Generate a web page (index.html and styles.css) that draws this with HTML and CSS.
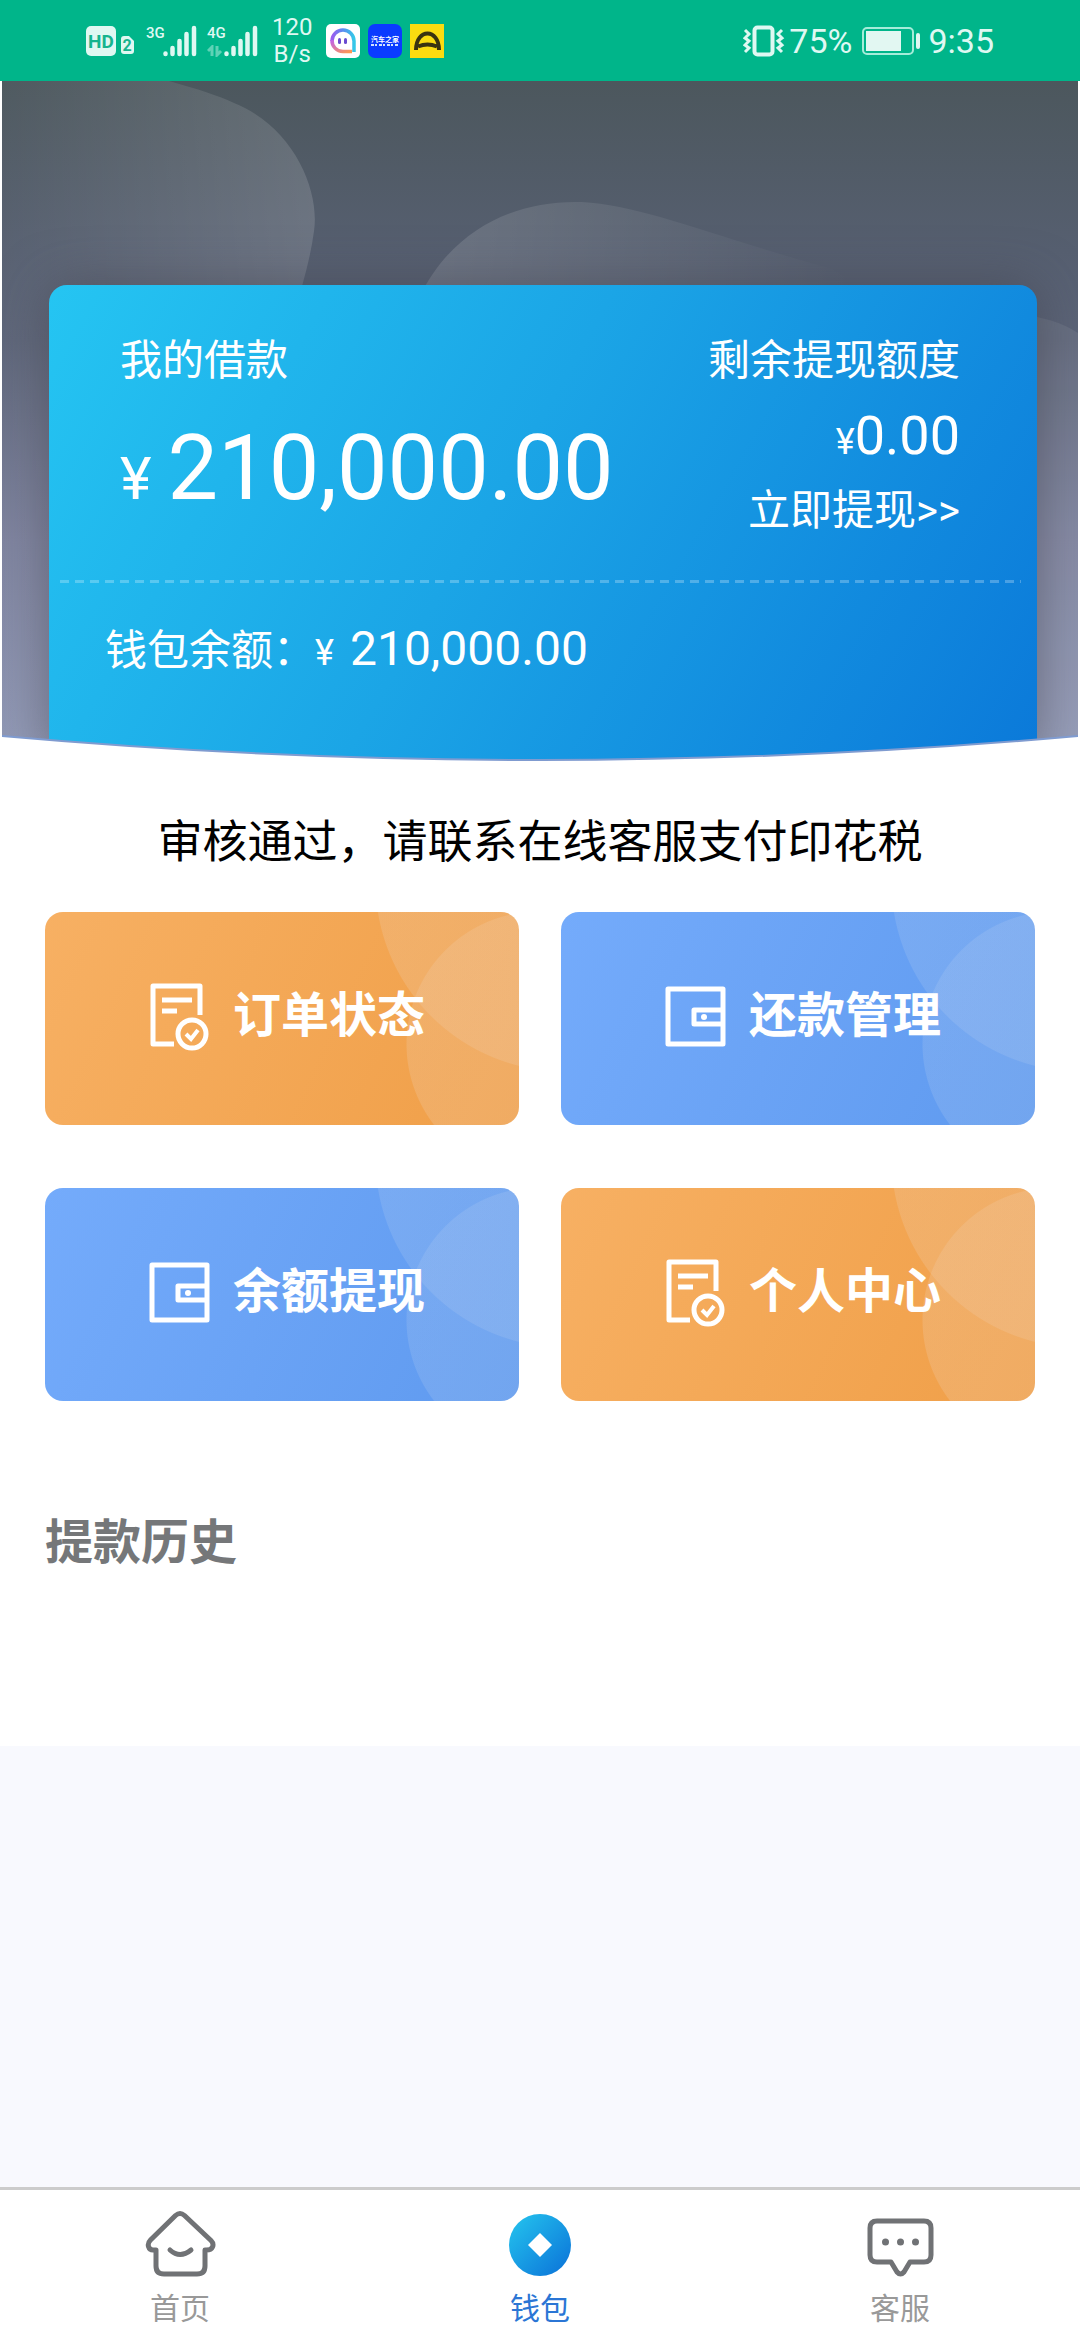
FILE: index.html
```html
<!DOCTYPE html>
<html lang="zh-CN">
<head>
<meta charset="utf-8">
<meta name="viewport" content="width=device-width, initial-scale=1">
<title>钱包</title>
<link rel="stylesheet" href="styles.css">
</head>
<body>
<svg class="sprite" aria-hidden="true">
  <symbol id="signal" viewBox="0 0 34 32">
    <path d="M2.500 28.500v.5M9.500 23v6M16.500 16v13M23.500 9v20M31 3v26" fill="none" stroke="currentColor" stroke-width="4.500" stroke-linecap="round"/>
  </symbol>
  <symbol id="order" viewBox="0 0 72 72">
    <path d="M35 65H14V7h47v29" fill="none" stroke="currentColor" stroke-width="5" stroke-linejoin="round"/>
    <path d="M23 21h30M23 32h15" fill="none" stroke="currentColor" stroke-width="5"/>
    <circle cx="53" cy="55" r="14" fill="none" stroke="currentColor" stroke-width="5"/>
    <path d="M47 55l5 5 7-9" fill="none" stroke="currentColor" stroke-width="4"/>
  </symbol>
  <symbol id="purse" viewBox="0 0 72 72">
    <path d="M13 10h55v55H13zM68 31H39v14h29" fill="none" stroke="currentColor" stroke-width="5" stroke-linejoin="round"/>
    <circle cx="49" cy="38" r="3" fill="currentColor"/>
  </symbol>
</svg>

<header class="status">
  <div class="status-side">
    <svg class="hd" viewBox="0 0 50 32" aria-hidden="true">
      <rect x="0" y="1" width="30" height="30" rx="5" fill="#dff8f2"/>
      <text x="15" y="23" class="hd-text">HD</text>
      <path d="M35 14a3 3 0 0 1 3-3h5l5 5v10a3 3 0 0 1-3 3h-7a3 3 0 0 1-3-3z" fill="#dff8f2"/>
      <text x="41" y="26" class="sim-text">2</text>
    </svg>
    <div class="cell"><span class="cell-type">3G</span><svg class="bars"><use href="#signal"/></svg></div>
    <div class="cell"><span class="cell-type">4G</span><svg class="bars"><use href="#signal"/></svg>
      <svg class="updown" viewBox="0 0 16 12" aria-hidden="true"><path d="M5 11V2L1 6M10 1v9l4-4" fill="none" stroke="#5fd2b6" stroke-width="3"/></svg>
    </div>
    <div class="rate">120<br>B/s</div>
    <div class="apps">
      <svg class="app" viewBox="0 0 34 34" aria-hidden="true">
        <defs>
          <linearGradient id="ring" x1="0" y1="0" x2="1" y2="0"><stop offset="0" stop-color="#9a5cf0"/><stop offset=".5" stop-color="#5a8df0"/><stop offset="1" stop-color="#35c8e8"/></linearGradient>
          <linearGradient id="ring2" x1="0" y1="0" x2="1" y2="1"><stop offset="0" stop-color="#c060e8"/><stop offset="1" stop-color="#ff9a50"/></linearGradient>
        </defs>
        <rect width="34" height="34" rx="5" fill="#fff"/>
        <path d="M6 17a11 11 0 0 1 22 0v11" fill="none" stroke="url(#ring)" stroke-width="3.500"/>
        <path d="M6 16a11 11 0 0 0 11 11.500h9" fill="none" stroke="url(#ring2)" stroke-width="3.500"/>
        <rect x="12" y="14" width="3" height="6" rx="1.500" fill="#6a4bd0"/><rect x="18" y="14" width="3" height="6" rx="1.500" fill="#6a4bd0"/>
      </svg>
      <svg class="app" viewBox="0 0 34 34" aria-hidden="true">
        <rect width="34" height="34" rx="7" fill="#0a3bff"/>
        <text x="17" y="18" class="auto-text">汽车之家</text>
        <path d="M3 21h28" stroke="#cfe0ff" stroke-width="2" stroke-dasharray="3 1 2 2"/>
      </svg>
      <svg class="app" viewBox="0 0 34 34" aria-hidden="true">
        <rect width="34" height="34" fill="#fbdc10"/>
        <path d="M6 26C6 4 29 4 29 26M8 22.500q9.500-4 19 0" fill="none" stroke="#3a3410" stroke-width="4"/>
      </svg>
    </div>
  </div>
  <div class="status-side">
    <svg class="vibrate" viewBox="0 0 42 34" aria-hidden="true">
      <rect x="11.500" y="3.500" width="18" height="27" rx="3" fill="none" stroke="currentColor" stroke-width="4"/>
      <path d="M2 6l4 4-4 4 4 3-4 4 4 3-4 4M39 6l-4 4 4 4-4 3 4 4-4 3 4 4" fill="none" stroke="currentColor" stroke-width="3"/>
    </svg>
    <span class="battery-level">75%</span>
    <svg class="battery" viewBox="0 0 60 28" aria-hidden="true">
      <rect x="1" y="1" width="50" height="26" rx="4" fill="none" stroke="#a5ecd9" stroke-width="2"/>
      <rect x="4" y="4" width="35" height="20" fill="#e2f7f2"/>
      <path d="M56 8v12" stroke="#dff8f2" stroke-width="4" stroke-linecap="round"/>
    </svg>
    <time class="clock">9:35</time>
  </div>
</header>

<main class="panel">
  <section class="hero">
    <svg class="hero-shapes" viewBox="0 0 1076 681" preserveAspectRatio="none" aria-hidden="true">
      <defs>
        <linearGradient id="blobA" x1="0" y1="0" x2="1" y2="0"><stop offset="0" stop-color="#fff" stop-opacity=".02"/><stop offset="1" stop-color="#fff" stop-opacity=".14"/></linearGradient>
        <linearGradient id="blobB" x1="0" y1="0" x2="1" y2="0"><stop offset="0" stop-color="#fff" stop-opacity=".14"/><stop offset=".9" stop-color="#fff" stop-opacity="0"/></linearGradient>
      </defs>
      <path d="M0 0H167C195 8 215 14 232 22 292 46 318 110 312 150C308 180 300 205 290 240V681H0z" fill="url(#blobA)"/>
      <path d="M418 215C450 150 510 119 580 121C640 124 720 158 830 188L900 230H418z" fill="url(#blobB)"/>
      <path d="M1000 232Q1050 234 1076 252V681H1000z" fill="#fff" fill-opacity=".07"/>
    </svg>
    <div class="loan">
      <div class="loan-top">
        <div class="loan-main">
          <div>我的借款</div>
          <div class="loan-sum"><span class="yen">¥</span>210,000.00</div>
        </div>
        <div class="loan-quota">
          <div>剩余提现额度</div>
          <div class="quota-sum"><span class="yen">¥</span>0.00</div>
          <a href="#withdraw">立即提现&gt;&gt;</a>
        </div>
      </div>
      <div class="divider"></div>
      <div class="balance">钱包余额：<span class="yen">¥</span><span class="balance-sum">210,000.00</span></div>
    </div>
    <svg class="hero-curve" viewBox="0 0 1076 28" preserveAspectRatio="none" aria-hidden="true">
      <path d="M0 2Q538 50 1076 2V28H0z" fill="#fff"/>
      <path d="M0 2Q538 50 1076 2" fill="none" stroke="#7f9bd0" stroke-width="2"/>
    </svg>
  </section>

  <p class="notice">审核通过，请联系在线客服支付印花税</p>

  <div class="actions">
    <a class="action orange" href="#orders"><svg class="action-icon" aria-hidden="true"><use href="#order"/></svg>订单状态</a>
    <a class="action blue" href="#repay"><svg class="action-icon" aria-hidden="true"><use href="#purse"/></svg>还款管理</a>
    <a class="action blue" href="#withdraw"><svg class="action-icon" aria-hidden="true"><use href="#purse"/></svg>余额提现</a>
    <a class="action orange" href="#profile"><svg class="action-icon" aria-hidden="true"><use href="#order"/></svg>个人中心</a>
  </div>

  <h2 class="history">提款历史</h2>
</main>

<nav class="tabs">
  <a class="tab" href="#home">
    <svg class="tab-icon" viewBox="0 0 72 72" aria-hidden="true">
      <path d="M31.500 6.500Q36 2.500 40.500 6.500L67 31.500Q70 34.500 68.500 38T61 41V57Q61 65 53 65H20Q12 65 12 57V41H9Q5.500 41 4.500 37.500T6.500 31z" fill="none" stroke="#707275" stroke-width="5" stroke-linejoin="round"/>
      <path d="M26 41q10 9 21 0" fill="none" stroke="#707275" stroke-width="5" stroke-linecap="round"/>
    </svg>
    首页
  </a>
  <a class="tab current" href="#wallet" aria-current="page">
    <svg class="tab-icon" viewBox="0 0 72 72" aria-hidden="true">
      <defs><linearGradient id="coin" x1=".1" y1=".1" x2=".9" y2=".9"><stop offset="0" stop-color="#22bdec"/><stop offset="1" stop-color="#0d79da"/></linearGradient></defs>
      <circle cx="36" cy="36" r="31" fill="url(#coin)"/>
      <path d="M36 24l12 12-12 12-12-12z" fill="#fff"/>
    </svg>
    钱包
  </a>
  <a class="tab" href="#service">
    <svg class="tab-icon" viewBox="0 0 72 72" aria-hidden="true">
      <path d="M13 12H60Q67 12 67 19V46Q67 53 60 53H46L40 63Q36.500 67 33 63L27 53H13Q6 53 6 46V19Q6 12 13 12z" fill="none" stroke="#707275" stroke-width="5" stroke-linejoin="round"/>
      <g fill="#707275"><circle cx="21.500" cy="33" r="3.500"/><circle cx="36.500" cy="33" r="3.500"/><circle cx="51.500" cy="33" r="3.500"/></g>
    </svg>
    客服
  </a>
</nav>
</body>
</html>
```

FILE: styles.css
```css
* { box-sizing: border-box; }

body {
  margin: 0;
  min-height: 100vh;
  display: flex;
  flex-direction: column;
  background: #f8f9fe;
  color: #000;
  font-family: Roboto, "Noto Sans CJK SC", sans-serif;
}

a { color: inherit; text-decoration: none; }

.sprite { display: none; }

/* Status bar */
.status {
  display: flex;
  justify-content: space-between;
  align-items: center;
  height: 81px;
  padding: 0 86px;
  background: #00b58a;
  color: #dff8f2;
  font-size: 34px;
}
.status-side { display: flex; align-items: center; gap: 10px; }
.status-side svg { display: block; }
.hd { width: 50px; height: 32px; }
.hd-text { font: bold 19px Roboto, sans-serif; fill: #16b48e; text-anchor: middle; }
.sim-text { font: bold 16px Roboto, sans-serif; fill: #16b48e; text-anchor: middle; }
.cell { position: relative; display: flex; align-items: flex-start; }
.cell-type { width: 17px; font-size: 15px; line-height: 16px; font-weight: 500; }
.bars { width: 34px; height: 32px; }
.updown { position: absolute; left: 0; bottom: 0; width: 16px; height: 12px; }
.rate { margin-left: 4px; font-size: 24px; line-height: 27px; text-align: center; }
.apps { display: flex; gap: 8px; margin-left: 4px; }
.app { width: 34px; height: 34px; }
.auto-text { font: bold 7px "Noto Sans CJK SC", sans-serif; fill: #fff; text-anchor: middle; }
.vibrate { width: 42px; height: 34px; }
.battery-level { margin-left: -6px; }
.battery { width: 60px; height: 28px; }
.clock { margin-left: -4px; }

/* Header with the loan card */
.panel { padding-bottom: 169px; background: #fff; }
.hero {
  position: relative;
  display: flex;
  min-height: 681px;
  margin: 0 2px;
  padding: 204px 41px 0 47px;
  overflow: hidden;
  background: linear-gradient(#4c575d 0, #565f70 170px, #5c6478 260px, #7d829e 460px, #8f97b4 660px);
}
.hero-shapes { position: absolute; left: 0; top: 0; width: 100%; height: 100%; }
.hero-curve { position: absolute; left: 0; bottom: 0; width: 100%; height: 28px; }
.loan {
  position: relative;
  flex: 1;
  padding-top: 38px;
  border-radius: 18px 18px 0 0;
  background: linear-gradient(120deg, #25c5f2 0, #1ba5e6 45%, #0b79d9 100%);
  box-shadow: 0 0 50px rgba(60, 60, 70, 0.5);
  color: #fff;
  font-size: 42px;
  line-height: 75px;
}
.yen { line-height: 1; }
.loan-top { display: flex; justify-content: space-between; padding: 0 77px 0 71px; }
.loan-sum { font-size: 90px; line-height: 141px; }
.loan-sum .yen { margin-right: 16px; font-size: 60px; }
.loan-quota { text-align: right; }
.quota-sum { font-size: 54px; }
.quota-sum .yen { font-size: 36px; }
.divider {
  height: 3px;
  margin: 32px 16px 28px 11px;
  background: repeating-linear-gradient(90deg, rgba(255, 255, 255, 0.25) 0 9px, transparent 9px 15px);
}
.balance { display: flex; align-items: baseline; padding-left: 56px; }
.balance .yen { font-size: 36px; }
.balance-sum { margin-left: 16px; font-size: 48px; }

.notice { margin: 51px 24px 39px; font-size: 45px; line-height: 60px; text-align: center; }

/* Shortcuts */
.actions {
  display: grid;
  grid-template-columns: 1fr 1fr;
  gap: 63px 42px;
  padding: 0 45px;
}
.action {
  display: flex;
  justify-content: center;
  align-items: center;
  gap: 22px;
  height: 213px;
  padding-bottom: 16px;
  border-radius: 18px;
  color: #fff;
  font-size: 48px;
  font-weight: bold;
}
.action-icon { width: 72px; height: 72px; margin-top: 8px; }
.orange {
  background:
    radial-gradient(circle at calc(100% + 46px) -30px, rgba(240, 200, 160, 0.3) 189px, transparent 190px),
    radial-gradient(circle at calc(100% + 20px) 132px, rgba(240, 200, 160, 0.3) 132px, transparent 133px),
    linear-gradient(115deg, #f7b063, #f09f48);
}
.blue {
  background:
    radial-gradient(circle at calc(100% + 46px) -30px, rgba(180, 205, 240, 0.22) 189px, transparent 190px),
    radial-gradient(circle at calc(100% + 20px) 132px, rgba(180, 205, 240, 0.22) 132px, transparent 133px),
    linear-gradient(115deg, #74abfb, #5f9aef);
}

.history { margin: 106px 45px 0; color: #757779; font-size: 48px; line-height: 72px; }
.panel { padding-bottom: 167px; }

/* Bottom tabs */
.tabs {
  position: sticky;
  bottom: 0;
  display: flex;
  margin-top: auto;
  border-top: 3px solid #ccc;
  background: #fff;
}
.tab {
  flex: 1;
  display: flex;
  flex-direction: column;
  align-items: center;
  gap: 10px;
  padding: 19px 0 13px;
  color: #999;
  font-size: 30px;
  line-height: 36px;
}
.tab.current { color: #2b76d5; }
.tab-icon { width: 72px; height: 72px; }
```
